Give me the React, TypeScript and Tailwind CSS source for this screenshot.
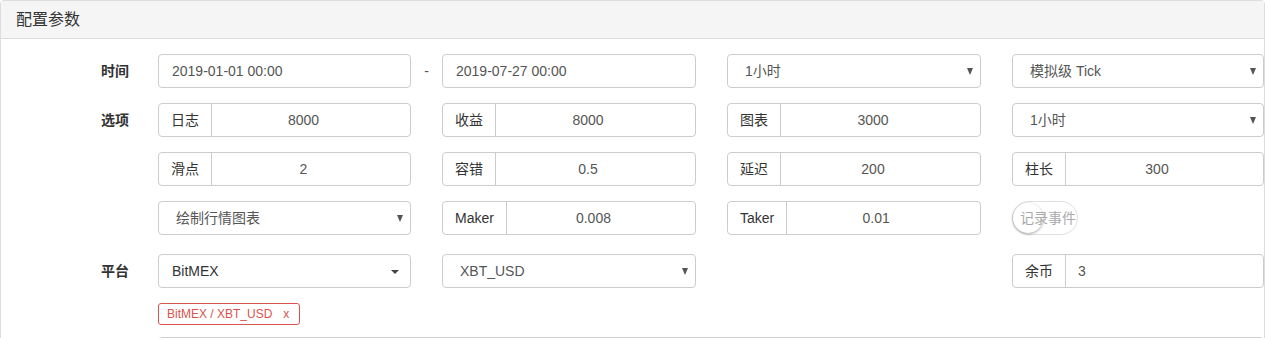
import React from 'react';

const font = { fontFamily: '"Liberation Sans", "Noto Sans CJK SC", sans-serif' };

const box = 'h-[34px] rounded-[4px] border border-[#ccc] bg-white';

function TextInput({ value }: { value: string }) {
  return (
    <div className={`${box} flex items-center px-[13px] text-[14px] text-[#555]`}>{value}</div>
  );
}

function AddonInput({ label, value, left }: { label: string; value: string; left?: boolean }) {
  return (
    <div className={`${box} flex items-stretch text-[14px]`}>
      <span className="flex items-center border-r border-[#ccc] px-[12px] text-[#333]">{label}</span>
      <span
        className={
          left
            ? 'flex flex-1 items-center px-[12px] text-[#555]'
            : 'flex flex-1 items-center justify-center pr-[15px] text-[#555]'
        }
      >
        {value}
      </span>
    </div>
  );
}

function SelectBox({ value, dark }: { value: string; dark?: boolean }) {
  return (
    <div className={`${box} flex items-center justify-between text-[14px]`}>
      <span className={dark ? 'pl-[13px] text-[#333]' : 'pl-[17px] text-[#555]'}>{value}</span>
      {dark ? (
        <span className="mr-[11px] mt-[1px] h-0 w-0 border-x-[4px] border-t-[4px] border-x-transparent border-t-[#444]" />
      ) : (
        <span className="mr-[7px] h-0 w-0 border-x-[3.5px] border-t-[7px] border-x-transparent border-t-[#555]" />
      )}
    </div>
  );
}

function Row({ label, children, className }: { label?: string; children: React.ReactNode; className?: string }) {
  return (
    <div className={`flex ${className ?? ''}`}>
      <div className="flex w-[157px] shrink-0 items-center justify-end pr-[29px] text-[14px] font-bold text-[#333]">
        {label}
      </div>
      <div className="grid grid-cols-[253px_254px_254px_252px] gap-x-[31px]">{children}</div>
    </div>
  );
}

export default function App() {
  return (
    <div className="w-[1265px] bg-white" style={font}>
      <div className="rounded-t-[4px] border border-[#ddd]">
        <div className="flex h-[38px] items-center border-b border-[#ddd] bg-[#f5f5f5] px-[15px] text-[16px] text-[#333]">
          配置参数
        </div>
        <div className="pt-[15px] pb-[20px]">
          <Row label="时间">
            <div className="relative">
              <TextInput value="2019-01-01 00:00" />
              <span className="absolute top-0 right-[-31px] flex h-[34px] w-[31px] items-center justify-center text-[14px] text-[#555]">
                -
              </span>
            </div>
            <TextInput value="2019-07-27 00:00" />
            <SelectBox value="1小时" />
            <SelectBox value="模拟级 Tick" />
          </Row>
          <Row label="选项" className="mt-[15px]">
            <AddonInput label="日志" value="8000" />
            <AddonInput label="收益" value="8000" />
            <AddonInput label="图表" value="3000" />
            <SelectBox value="1小时" />
          </Row>
          <Row className="mt-[15px]">
            <AddonInput label="滑点" value="2" />
            <AddonInput label="容错" value="0.5" />
            <AddonInput label="延迟" value="200" />
            <AddonInput label="柱长" value="300" />
          </Row>
          <Row className="mt-[15px]">
            <SelectBox value="绘制行情图表" />
            <AddonInput label="Maker" value="0.008" />
            <AddonInput label="Taker" value="0.01" />
            <div className="flex items-center">
              <div className="relative flex h-[34px] w-[66px] items-center rounded-full border border-[#dfdfdf] bg-white">
                <span className="absolute top-[1px] left-[0px] h-[30px] w-[30px] rounded-full bg-white shadow-[0_1px_3px_rgba(0,0,0,0.35)]" />
                <span className="relative pl-[7px] text-[14px] text-[#aaa]">记录事件</span>
              </div>
            </div>
          </Row>
          <Row label="平台" className="mt-[19px]">
            <SelectBox value="BitMEX" dark />
            <SelectBox value="XBT_USD" />
            <div />
            <AddonInput label="余币" value="3" left />
          </Row>
          <Row className="mt-[15px]">
            <div className="flex">
              <span className="flex h-[22px] items-center rounded-[3px] border border-[#d9534f] pr-[10px] pl-[8px] text-[12px] text-[#d9534f]">
                BitMEX / XBT_USD<span className="ml-[11px]">x</span>
              </span>
            </div>
          </Row>
          <Row className="mt-[12px]">
            <div className={`${box} col-span-4`} />
          </Row>
        </div>
      </div>
    </div>
  );
}
